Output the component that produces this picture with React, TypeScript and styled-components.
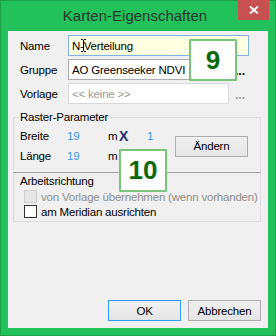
import React from "react";
import styled, { createGlobalStyle } from "styled-components";

const UI_FONT = `"Liberation Sans", Arial, sans-serif`;

const GlobalStyle = createGlobalStyle`
  html, body { margin: 0; padding: 0; }
  body {
    width: 276px; height: 336px; overflow: hidden;
    background: #22c05a;
    font-family: ${UI_FONT};
  }
  * { box-sizing: border-box; }
`;

const Window = styled.div`
  width: 276px;
  height: 336px;
  background: #23c15c;
  border: 1px solid #1b9f49;
  display: flex;
  flex-direction: column;
`;

const TitleBar = styled.div`
  height: 30px;
  display: grid;
  grid-template-columns: 1fr auto 1fr;
  align-items: start;
  padding-right: 6px;
`;

const Title = styled.div`
  grid-column: 2;
  font-size: 15px;
  line-height: 30px;
  color: #26382c;
  white-space: nowrap;
`;

const CloseButton = styled.div`
  grid-column: 3;
  justify-self: end;
  width: 31px;
  height: 20px;
  margin-top: -1px;
  background: #c75050;
  display: flex;
  align-items: center;
  justify-content: center;
`;

const Client = styled.div`
  flex: 1;
  margin: 0 7px 7px;
  background: #f0f0f0;
  position: relative;
  display: flex;
  flex-direction: column;
  padding: 4px 7px 7px 5px;
  font-size: 11.5px;
  letter-spacing: -0.2px;
  color: #000;
`;

const FormRow = styled.div`
  display: flex;
  align-items: center;
  height: 21px;
  padding-left: 7px;
  & + & { margin-top: 3px; }
`;

const Label = styled.span`
  width: 48px;
  flex: none;
`;

type FieldVariant = "focus" | "normal" | "disabled";

const Field = styled.div<{ $variant: FieldVariant; $w: number }>`
  position: relative;
  width: ${(p) => p.$w}px;
  height: 21px;
  flex: none;
  padding-left: 3px;
  display: flex;
  align-items: center;
  white-space: nowrap;
  overflow: hidden;
  border: 1px solid
    ${(p) =>
      p.$variant === "focus" ? "#7eb4ea" : p.$variant === "normal" ? "#abadb3" : "#d9d9d9"};
  background: ${(p) => (p.$variant === "focus" ? "#ffffe1" : "#ffffff")};
  color: ${(p) => (p.$variant === "disabled" ? "#9a9a9a" : "#000")};
`;

const Dots = styled.span<{ $disabled?: boolean }>`
  margin-left: 6px;
  padding-top: 3px;
  font-size: 12px;
  font-weight: bold;
  letter-spacing: 0px;
  color: ${(p) => (p.$disabled ? "#a0a0a0" : "#000")};
`;

const IBeam = styled.svg`
  position: absolute;
  left: 12px;
  top: 3px;
`;

const GroupBox = styled.fieldset`
  margin: 7px 0 0 0;
  padding: 0 7px 6px 5px;
  border: 1px solid #dcdcdc;
  border-bottom: none;
  min-width: 0;
`;

const Legend = styled.legend`
  padding: 0 1px;
`;

const RasterGrid = styled.div`
  display: grid;
  grid-template-columns: 47px 41px 11px 28px 28px auto;
  grid-template-rows: 20px 20px;
  align-items: center;
  margin: 3px 0 0 1px;
`;

const Value = styled.span`
  color: #3a94ef;
`;

const Times = styled.span`
  font-size: 14px;
  font-weight: bold;
  letter-spacing: 0;
  color: #1c2f6e;
`;

const Button = styled.div<{ $default?: boolean }>`
  width: 73px;
  height: 21px;
  display: flex;
  align-items: center;
  justify-content: center;
  border: 1px solid ${(p) => (p.$default ? "#3399ff" : "#adadad")};
  background: linear-gradient(#f0f0f0, #e5e5e5);
  color: #000;
`;

const SideButton = styled(Button)`
  grid-column: 6;
  grid-row: 1 / span 2;
  align-self: center;
`;

const DirectionBox = styled.div`
  border: 1px solid #dcdcdc;
  border-top-color: #a0a0a0;
  padding: 0 6px 2px 6px;
`;

const BoxTitle = styled.div`
  height: 16px;
  line-height: 16px;
`;

const CheckRow = styled.div<{ $disabled?: boolean }>`
  display: flex;
  align-items: center;
  height: 15px;
  gap: 4px;
  padding-left: 4px;
  white-space: nowrap;
  color: ${(p) => (p.$disabled ? "#8d8d8d" : "#000")};
`;

const CheckBox = styled.span<{ $disabled?: boolean }>`
  width: 13px;
  height: 13px;
  flex: none;
  border: 1px solid ${(p) => (p.$disabled ? "#cccccc" : "#333333")};
  background: ${(p) => (p.$disabled ? "#e6e6e6" : "#ffffff")};
`;

const ButtonBar = styled.div`
  margin-top: auto;
  display: flex;
  justify-content: flex-end;
  gap: 7px;
`;

const Badge = styled.div<{ $x: number; $y: number; $h: number }>`
  position: absolute;
  left: ${(p) => p.$x}px;
  top: ${(p) => p.$y}px;
  width: 48px;
  height: ${(p) => p.$h}px;
  border: 2px solid #79c479;
  border-radius: 1px;
  background: #ffffff;
  display: flex;
  align-items: center;
  justify-content: center;
  font-family: "Liberation Sans", Arial, sans-serif;
  font-size: 26px;
  font-weight: bold;
  letter-spacing: 0;
  color: #0a6a0a;
`;

export default function App() {
  return (
    <>
      <GlobalStyle />
      <Window>
        <TitleBar>
          <Title>Karten-Eigenschaften</Title>
          <CloseButton>
            <svg width="10" height="8" viewBox="0 0 10 8">
              <path d="M1 0.5 L9 7.5 M9 0.5 L1 7.5" stroke="#fff" strokeWidth="1.9" />
            </svg>
          </CloseButton>
        </TitleBar>
        <Client>
          <FormRow>
            <Label>Name</Label>
            <Field $variant="focus" $w={181}>
              N-Verteilung
              <IBeam width="5" height="13" viewBox="0 0 5 13">
                <path d="M0 0.5 H2 M3 0.5 H5 M2.5 1 V12 M0 12.5 H2 M3 12.5 H5" stroke="#000" strokeWidth="1" />
              </IBeam>
            </Field>
          </FormRow>
          <FormRow>
            <Label>Gruppe</Label>
            <Field $variant="normal" $w={161}>AO Greenseeker NDVI</Field>
            <Dots>...</Dots>
          </FormRow>
          <FormRow>
            <Label>Vorlage</Label>
            <Field $variant="disabled" $w={161}>&lt;&lt; keine &gt;&gt;</Field>
            <Dots $disabled>...</Dots>
          </FormRow>

          <GroupBox>
            <Legend>Raster-Parameter</Legend>
            <RasterGrid>
              <span>Breite</span>
              <Value>19</Value>
              <span>m</span>
              <Times>X</Times>
              <Value>1</Value>
              <SideButton>Ändern</SideButton>
              <span>Länge</span>
              <Value>19</Value>
              <span>m</span>
            </RasterGrid>
          </GroupBox>

          <DirectionBox>
            <BoxTitle>Arbeitsrichtung</BoxTitle>
            <CheckRow $disabled>
              <CheckBox $disabled />
              von Vorlage übernehmen (wenn vorhanden)
            </CheckRow>
            <CheckRow>
              <CheckBox />
              am Meridian ausrichten
            </CheckRow>
          </DirectionBox>

          <ButtonBar>
            <Button $default>OK</Button>
            <Button>Abbrechen</Button>
          </ButtonBar>

          <Badge $x={181} $y={8} $h={42}>9</Badge>
          <Badge $x={111} $y={118} $h={43}>10</Badge>
        </Client>
      </Window>
    </>
  );
}
